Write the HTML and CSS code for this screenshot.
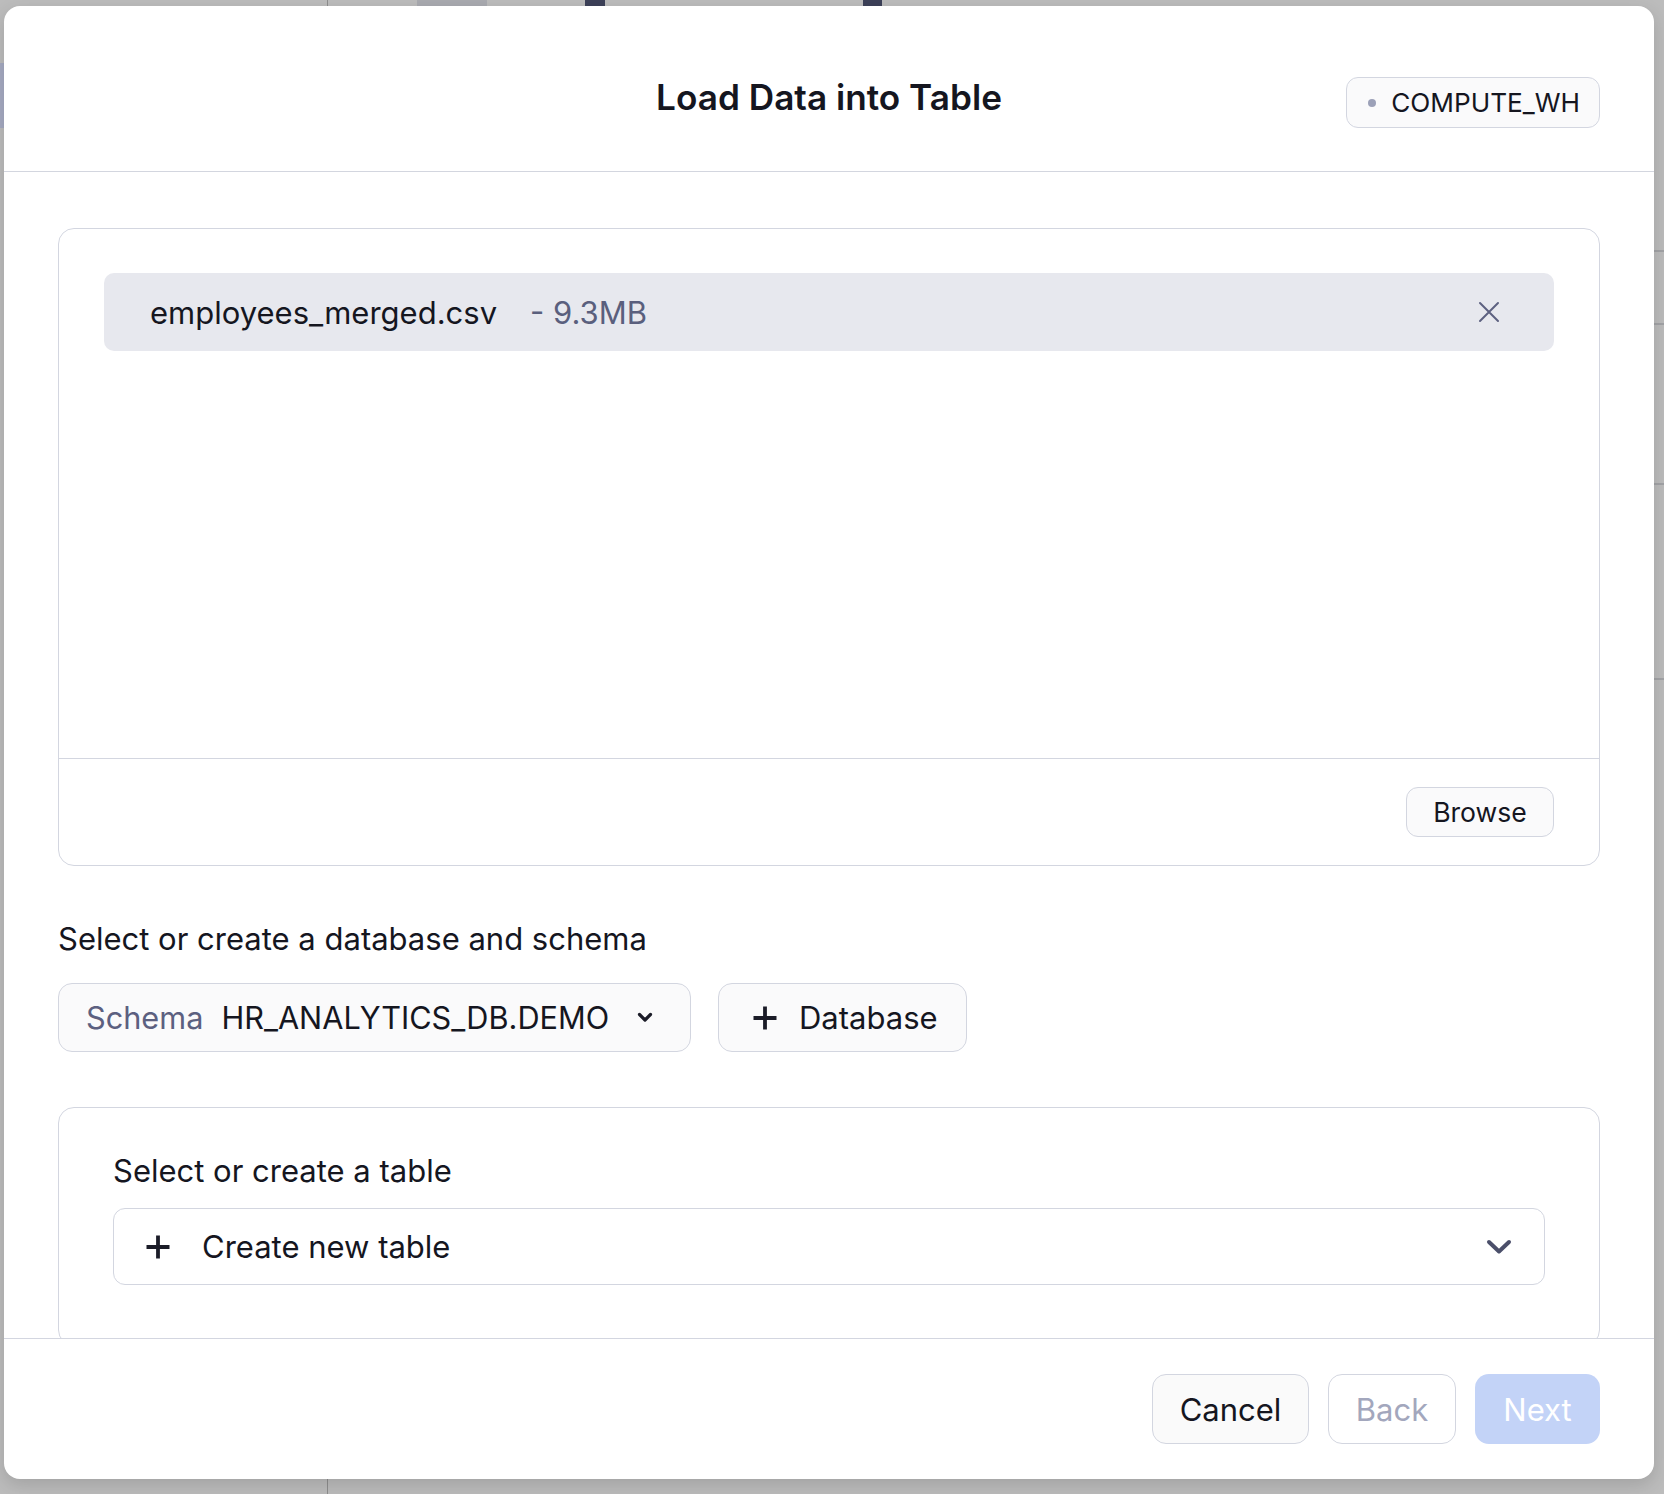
FILE: index.html
```html
<!DOCTYPE html>
<html lang="en">
<head>
<meta charset="utf-8">
<title>Load Data into Table</title>
<link rel="stylesheet" href="styles.css">
</head>
<body>
<div class="backdrop" aria-hidden="true">
  <div class="bd-vline"></div>
  <div class="bd-top-grey"></div>
  <div class="bd-top-dark bd-dark-1"></div>
  <div class="bd-top-dark bd-dark-2"></div>
  <div class="bd-left-bar"></div>
  <div class="bd-right-line bd-rl-1"></div>
  <div class="bd-right-line bd-rl-2"></div>
  <div class="bd-right-line bd-rl-3"></div>
  <div class="bd-right-line bd-rl-4"></div>
</div>
<div class="overlay">
  <div class="modal">
    <header class="header">
      <h1 class="title">Load Data into Table</h1>
      <div class="wh-pill"><span class="wh-dot"></span><span>COMPUTE_WH</span></div>
    </header>
    <main class="body">
      <section class="upload">
        <div class="upload-files">
          <div class="file-row">
            <span class="file-name">employees_merged.csv</span>
            <span class="file-size">- 9.3MB</span>
            <span class="file-remove">
              <svg width="22" height="22" viewBox="0 0 22 22"><path d="M2 2 L20 20 M20 2 L2 20" stroke="#5d6180" stroke-width="2" fill="none" stroke-linecap="round"/></svg>
            </span>
          </div>
        </div>
        <div class="upload-actions">
          <button class="btn-browse">Browse</button>
        </div>
      </section>

      <h2 class="section-label">Select or create a database and schema</h2>
      <div class="schema-row">
        <div class="schema-select">
          <span class="schema-key">Schema</span>
          <span class="schema-value">HR_ANALYTICS_DB.DEMO</span>
          <svg class="chev-small" width="16" height="11" viewBox="0 0 16 11"><path d="M2.5 2.5 L8 8 L13.5 2.5" stroke="#1b1c28" stroke-width="3.2" fill="none" stroke-linecap="round" stroke-linejoin="round"/></svg>
        </div>
        <button class="btn-db">
          <svg width="26" height="26" viewBox="0 0 26 26"><path d="M13 1.5 V24.5 M1.5 13 H24.5" stroke="#1b1c28" stroke-width="3.8" fill="none"/></svg>
          <span>Database</span>
        </button>
      </div>

      <section class="table-card">
        <h2 class="section-label table-label">Select or create a table</h2>
        <div class="table-select">
          <svg width="26" height="26" viewBox="0 0 26 26"><path d="M13 1.5 V24.5 M1.5 13 H24.5" stroke="#1b1c28" stroke-width="3.8" fill="none"/></svg>
          <span class="table-select-text">Create new table</span>
          <svg class="chev-big" width="26" height="16" viewBox="0 0 26 16"><path d="M3 3 L13 12.5 L23 3" stroke="#4b4f6a" stroke-width="4" fill="none" stroke-linecap="round" stroke-linejoin="round"/></svg>
        </div>
      </section>
    </main>
    <footer class="footer">
      <button class="btn btn-cancel">Cancel</button>
      <button class="btn btn-back">Back</button>
      <button class="btn btn-next">Next</button>
    </footer>
  </div>
</div>
</body>
</html>
```

FILE: styles.css
```css
* { box-sizing: border-box; }
html, body { margin: 0; padding: 0; }
body {
  width: 1664px;
  height: 1494px;
  overflow: hidden;
  background: #bcbcbc;
  font-family: "Inter", "Noto Sans", sans-serif;
  color: #15161f;
  position: relative;
}

/* dimmed app behind the modal */
.backdrop { position: absolute; inset: 0; }
.bd-vline { position: absolute; left: 327px; top: 0; width: 1px; height: 1494px; background: #8e8e8e; }
.bd-top-grey { position: absolute; left: 417px; top: 0; width: 70px; height: 6px; background: #a9aab0; }
.bd-top-dark { position: absolute; top: 0; height: 6px; background: #3c4058; }
.bd-dark-1 { left: 585px; width: 20px; }
.bd-dark-2 { left: 863px; width: 19px; }
.bd-left-bar { position: absolute; left: 0; top: 63px; width: 4px; height: 65px; background: #a6abc2; }
.bd-right-line { position: absolute; left: 1654px; width: 10px; height: 2px; background: #a2a3a6; }
.bd-rl-1 { top: 250px; }
.bd-rl-2 { top: 323px; }
.bd-rl-3 { top: 483px; }
.bd-rl-4 { top: 678px; }

.overlay {
  position: relative;
  padding: 6px 10px 15px 4px;
}
.modal {
  width: 1650px;
  height: 1473px;
  background: #fff;
  border-radius: 16px;
  display: flex;
  flex-direction: column;
  overflow: hidden;
  box-shadow: 0 6px 18px rgba(0, 0, 0, 0.14);
}

/* header */
.header {
  flex: none;
  height: 166px;
  border-bottom: 1px solid #d3d6df;
  display: grid;
  grid-template-columns: 1fr auto 1fr;
  align-items: start;
  padding: 71px 54px 0;
}
.title {
  grid-column: 2;
  margin: 0;
  font-size: 35.2px;
  line-height: 40px;
  font-weight: 600;
  color: #15161f;
}
.wh-pill {
  grid-column: 3;
  justify-self: end;
  height: 51px;
  display: flex;
  align-items: center;
  gap: 15px;
  padding: 0 19px 0 21px;
  border: 1px solid #d3d6e0;
  border-radius: 12px;
  background: #fafafb;
  font-size: 26.2px;
  color: #15161f;
}
.wh-dot { width: 8px; height: 8px; border-radius: 50%; background: #9ca1b8; }

/* body */
.body {
  flex: 1;
  overflow: hidden;
  padding: 56px 54px 0;
}
.upload {
  height: 638px;
  border: 1px solid #d3d6e0;
  border-radius: 16px;
  display: flex;
  flex-direction: column;
}
.upload-files {
  flex: none;
  height: 529px;
  padding: 44px 45px 0;
}
.file-row {
  height: 78px;
  background: #e7e8ee;
  border-radius: 10px;
  display: flex;
  align-items: center;
  padding: 0 54px 0 46px;
  font-size: 31px;
}
.file-name { color: #15161f; }
.file-size { margin-left: 33px; color: #5a5f7d; }
.file-remove { margin-left: auto; display: flex; }
.upload-actions {
  flex: 1;
  border-top: 1px solid #d3d6e0;
  display: flex;
  align-items: center;
  justify-content: flex-end;
  padding-right: 45px;
}
.btn-browse {
  height: 50px;
  width: 148px;
  padding: 0;
  font-family: inherit;
  font-size: 26.6px;
  color: #15161f;
  border: 1px solid #d3d6e0;
  border-radius: 12px;
  background: #fafafb;
}

.section-label {
  margin: 55px 0 0;
  font-size: 31px;
  line-height: 36px;
  font-weight: 400;
  color: #15161f;
}
.schema-row {
  display: flex;
  gap: 27px;
  margin-top: 26px;
}
.schema-select {
  width: 633px;
  height: 69px;
  display: flex;
  align-items: center;
  padding: 0 37px 0 27px;
  border: 1px solid #d3d6e0;
  border-radius: 14px;
  background: #fafafb;
  font-size: 30.7px;
}
.schema-key { color: #5c6080; margin-right: 18px; }
.schema-value { color: #15161f; }
.chev-small { margin-left: auto; }
.btn-db {
  width: 249px;
  height: 69px;
  display: flex;
  align-items: center;
  gap: 21px;
  padding: 0 0 0 33px;
  border: 1px solid #d3d6e0;
  border-radius: 14px;
  background: #fafafb;
  font-family: inherit;
  font-size: 31px;
  color: #15161f;
}

.table-card {
  margin-top: 55px;
  border: 1px solid #d3d6e0;
  border-radius: 16px;
  padding: 45px 54px 60px;
}
.table-label { margin: 0; }
.table-select {
  margin-top: 19px;
  height: 77px;
  display: flex;
  align-items: center;
  gap: 31px;
  padding: 0 32px 0 31px;
  border: 1px solid #d3d6e0;
  border-radius: 12px;
  background: #fff;
  font-size: 31px;
}
.chev-big { margin-left: auto; }

/* footer */
.footer {
  flex: none;
  height: 141px;
  border-top: 1px solid #d3d6e0;
  display: flex;
  align-items: center;
  justify-content: flex-end;
  gap: 19px;
  padding: 0 54px;
}
.btn {
  height: 70px;
  border-radius: 14px;
  font-family: inherit;
  font-size: 31px;
  padding: 0;
}
.btn-cancel { width: 157px; background: #fafafa; border: 1px solid #d3d6e0; color: #15161f; }
.btn-back { width: 128px; background: #fff; border: 1px solid #d3d6e0; color: #a3a7bd; }
.btn-next { width: 125px; background: #c3d3f7; border: none; color: #fff; }
```
